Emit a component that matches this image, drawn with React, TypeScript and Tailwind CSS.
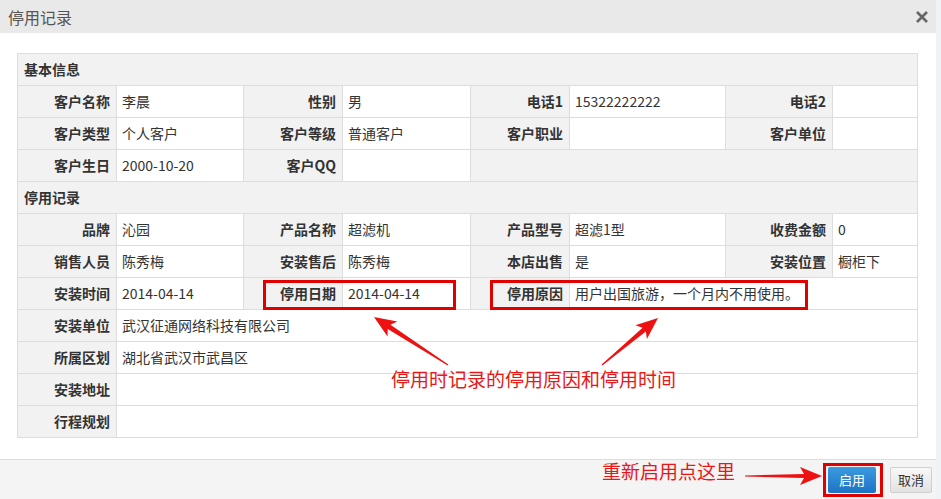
import React from "react";

const font = "font-['Noto_Sans_CJK_SC','Microsoft_YaHei',sans-serif]";

function Label({ children }: { children?: React.ReactNode }) {
  return (
    <td className="border border-[#dddddd] bg-[#f2f2f2] pr-[6px] text-right text-[14px] font-bold text-[#333]">
      {children}
    </td>
  );
}

function Value({ children, span }: { children?: React.ReactNode; span?: number }) {
  return (
    <td colSpan={span} className="border border-[#dddddd] bg-white pl-[5px] text-left text-[14px] text-[#333]">
      {children}
    </td>
  );
}

function Section({ title }: { title: string }) {
  return (
    <tr className="h-[32px]">
      <td colSpan={8} className="border border-[#dddddd] bg-[#f2f2f2] pl-[6px] text-[14px] font-bold text-[#333]">
        {title}
      </td>
    </tr>
  );
}

// arrow polygon from tail to tip
function arrow(x1: number, y1: number, x2: number, y2: number, head = 22, headW = 9, shaftW = 2.5) {
  const dx = x2 - x1;
  const dy = y2 - y1;
  const len = Math.hypot(dx, dy);
  const ux = dx / len;
  const uy = dy / len;
  const px = -uy;
  const py = ux;
  const bx = x2 - ux * head;
  const by = y2 - uy * head;
  const jx = bx + ux * 4;
  const jy = by + uy * 4;
  const pts = [
    [x1 + px * 0.6, y1 + py * 0.6],
    [jx + px * shaftW, jy + py * shaftW],
    [bx + px * headW, by + py * headW],
    [x2, y2],
    [bx - px * headW, by - py * headW],
    [jx - px * shaftW, jy - py * shaftW],
    [x1 - px * 0.6, y1 - py * 0.6],
  ];
  return pts.map((p) => p.join(",")).join(" ");
}

export default function App() {
  return (
    <div className={`relative w-[941px] h-[499px] overflow-hidden bg-[#eef3f8] ${font}`}>
      <div className="flex h-full w-[936px] flex-col bg-white">
        {/* 标题栏 */}
        <div className="flex h-[33px] shrink-0 items-center justify-between bg-[#e9e9e9] pl-[8px] pr-[8px]">
          <span className="text-[16px] text-[#555]">停用记录</span>
          <svg width="12" height="12" viewBox="0 0 12 12" className="mr-[0px]">
            <path d="M1 1L11 11M11 1L1 11" stroke="#666" strokeWidth="2.6" />
          </svg>
        </div>

        {/* 内容 */}
        <div className="flex-1 pl-[17px] pt-[20px]">
          <table className="w-[900px] table-fixed border-collapse">
            <colgroup>
              <col className="w-[99px]" />
              <col className="w-[127px]" />
              <col className="w-[99px]" />
              <col className="w-[128px]" />
              <col className="w-[99px]" />
              <col className="w-[156px]" />
              <col className="w-[107px]" />
              <col className="w-[85px]" />
            </colgroup>
            <tbody>
              <Section title="基本信息" />
              <tr className="h-[32px]">
                <Label>客户名称</Label>
                <Value>李晨</Value>
                <Label>性别</Label>
                <Value>男</Value>
                <Label>电话1</Label>
                <Value>15322222222</Value>
                <Label>电话2</Label>
                <Value />
              </tr>
              <tr className="h-[32px]">
                <Label>客户类型</Label>
                <Value>个人客户</Value>
                <Label>客户等级</Label>
                <Value>普通客户</Value>
                <Label>客户职业</Label>
                <Value />
                <Label>客户单位</Label>
                <Value />
              </tr>
              <tr className="h-[32px]">
                <Label>客户生日</Label>
                <Value>2000-10-20</Value>
                <Label>客户QQ</Label>
                <Value />
                <td colSpan={4} className="border border-[#dddddd] bg-[#f2f2f2]" />
              </tr>
              <Section title="停用记录" />
              <tr className="h-[32px]">
                <Label>品牌</Label>
                <Value>沁园</Value>
                <Label>产品名称</Label>
                <Value>超滤机</Value>
                <Label>产品型号</Label>
                <Value>超滤1型</Value>
                <Label>收费金额</Label>
                <Value>0</Value>
              </tr>
              <tr className="h-[32px]">
                <Label>销售人员</Label>
                <Value>陈秀梅</Value>
                <Label>安装售后</Label>
                <Value>陈秀梅</Value>
                <Label>本店出售</Label>
                <Value>是</Value>
                <Label>安装位置</Label>
                <Value>橱柜下</Value>
              </tr>
              <tr className="h-[32px]">
                <Label>安装时间</Label>
                <Value>2014-04-14</Value>
                <Label>停用日期</Label>
                <Value>2014-04-14</Value>
                <Label>停用原因</Label>
                <Value span={3}>用户出国旅游，一个月内不用使用。</Value>
              </tr>
              <tr className="h-[32px]">
                <Label>安装单位</Label>
                <Value span={7}>武汉征通网络科技有限公司</Value>
              </tr>
              <tr className="h-[32px]">
                <Label>所属区划</Label>
                <Value span={7}>湖北省武汉市武昌区</Value>
              </tr>
              <tr className="h-[32px]">
                <Label>安装地址</Label>
                <Value span={7} />
              </tr>
              <tr className="h-[32px]">
                <Label>行程规划</Label>
                <Value span={7} />
              </tr>
            </tbody>
          </table>
        </div>

        {/* 底部按钮 */}
        <div className="flex h-[40px] shrink-0 items-center justify-end gap-[14px] border-t border-[#dddddd] bg-[#f4f4f4] pr-[4px]">
          <button className="h-[26px] w-[48px] rounded-[2px] bg-gradient-to-b from-[#3a9be0] to-[#1c74c4] text-[13px] text-white">
            启用
          </button>
          <button className="h-[26px] w-[42px] rounded-[2px] border border-[#d0d0d0] bg-gradient-to-b from-[#f8f8f8] to-[#e2e2e2] text-[13px] text-[#333]">
            取消
          </button>
        </div>
      </div>

      {/* 标注 */}
      <div className="pointer-events-none absolute left-[263px] top-[280px] h-[30px] w-[193px] border-[3px] border-[#e00000]" />
      <div className="pointer-events-none absolute left-[490px] top-[280px] h-[30px] w-[318px] border-[3px] border-[#e00000]" />
      <div className="pointer-events-none absolute left-[823px] top-[463px] h-[34px] w-[60px] border-[3px] border-[#e00000]" />
      <div className="pointer-events-none absolute left-[391px] top-[367px] text-[19px] leading-[24px] text-[#e81818]">
        停用时记录的停用原因和停用时间
      </div>
      <div className="pointer-events-none absolute left-[602px] top-[459px] text-[19px] leading-[24px] text-[#e81818]">
        重新启用点这里
      </div>
      <svg className="pointer-events-none absolute left-0 top-0" width="941" height="499">
        <polygon points={arrow(448, 365, 374, 317)} fill="#ee1111" />
        <polygon points={arrow(602, 365, 658, 318)} fill="#ee1111" />
        <polygon points={arrow(745, 476, 822, 476, 22, 9, 2)} fill="#ee1111" />
      </svg>
    </div>
  );
}
